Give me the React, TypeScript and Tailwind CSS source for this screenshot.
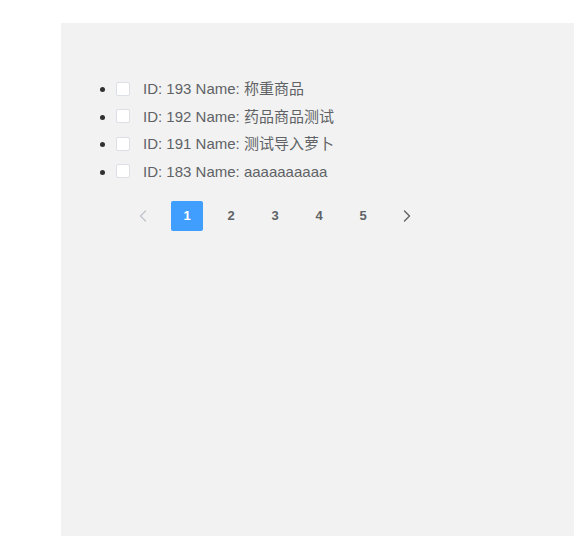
import { useState } from 'react';

const items = [
  { id: 193, name: '称重商品' },
  { id: 192, name: '药品商品测试' },
  { id: 191, name: '测试导入萝卜' },
  { id: 183, name: 'aaaaaaaaaa' },
];

const font = { fontFamily: '"Liberation Sans", Arial, "Noto Sans CJK SC", sans-serif' };

function Arrow({ dir, color }: { dir: 'left' | 'right'; color: string }) {
  return (
    <svg width="8" height="12" viewBox="0 0 8 12" fill="none">
      <polyline
        points={dir === 'left' ? '6.5,1 1.5,6 6.5,11' : '1.5,1 6.5,6 1.5,11'}
        stroke={color}
        strokeWidth="1.4"
        strokeLinecap="round"
        strokeLinejoin="round"
      />
    </svg>
  );
}

export default function App() {
  const [page, setPage] = useState(1);
  const [checked, setChecked] = useState<number[]>([]);

  const toggle = (id: number) =>
    setChecked(c => (c.includes(id) ? c.filter(x => x !== id) : [...c, id]));

  return (
    <div lang="zh-CN" className="w-[574px] h-[536px] bg-white overflow-hidden" style={font}>
      <div className="ml-[61px] mt-[23px] h-[513px] bg-[#f2f2f2] px-[15px] pt-[52px]">
        <ul className="list-disc pl-[40px] text-[15px] text-[#303133]">
          {items.map(item => (
            <li key={item.id} className="leading-[27.5px]">
              <label className="inline-flex items-center cursor-pointer align-top h-[27.5px]" onClick={() => toggle(item.id)}>
                <span
                  className={
                    'inline-block w-[14px] h-[14px] rounded-[2px] border ' +
                    (checked.includes(item.id)
                      ? 'bg-[#409eff] border-[#409eff]'
                      : 'bg-white border-[#dcdfe6]')
                  }
                />
                <span className="ml-[13px] text-[#606266]">
                  ID: {item.id} Name: {item.name}
                </span>
              </label>
            </li>
          ))}
        </ul>

        <div className="flex items-center gap-[12px] mt-[16px] ml-[51px]">
          <button className="w-[32px] h-[30px] flex items-center justify-center cursor-not-allowed">
            <Arrow dir="left" color="#c0c4cc" />
          </button>
          {[1, 2, 3, 4, 5].map(n => (
            <button
              key={n}
              onClick={() => setPage(n)}
              className={
                'w-[32px] h-[30px] rounded-[2px] flex items-center justify-center text-[13px] font-bold ' +
                (page === n ? 'bg-[#409eff] text-white' : 'text-[#606266]')
              }
            >
              {n}
            </button>
          ))}
          <button
            onClick={() => setPage(p => Math.min(5, p + 1))}
            className="w-[32px] h-[30px] flex items-center justify-center"
          >
            <Arrow dir="right" color="#606266" />
          </button>
        </div>
      </div>
    </div>
  );
}
